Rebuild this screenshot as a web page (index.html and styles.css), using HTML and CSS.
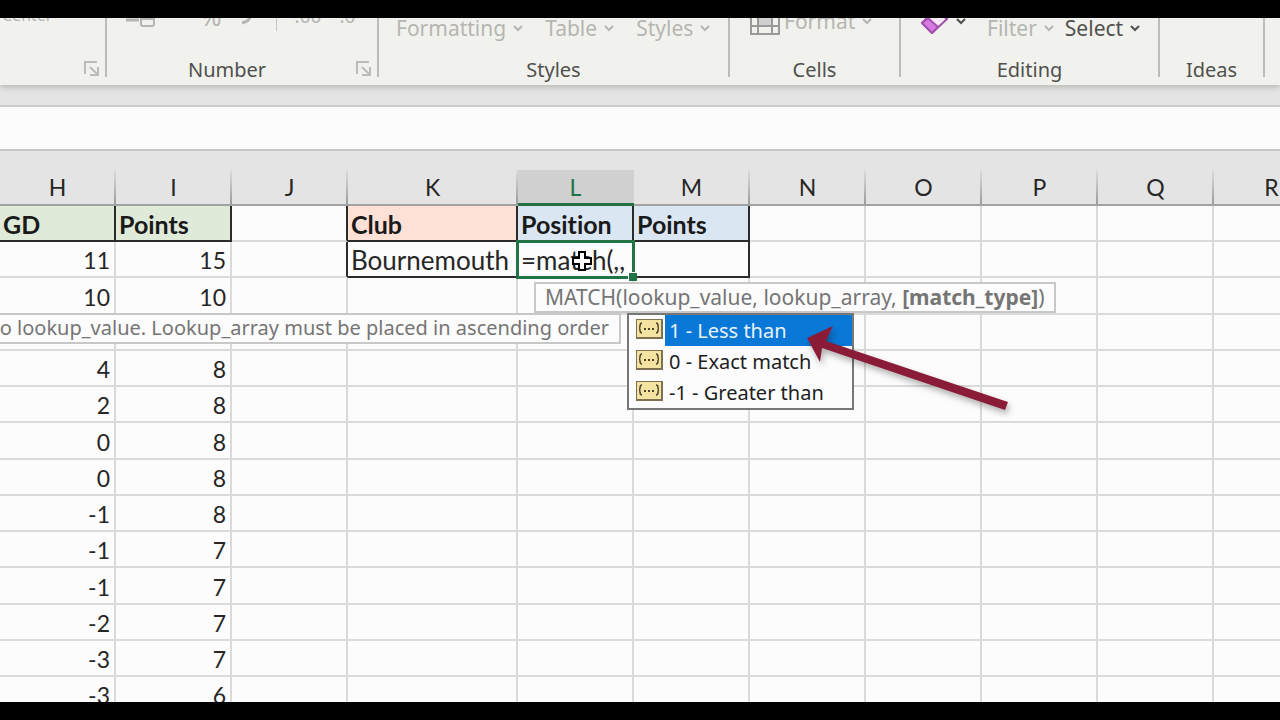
FILE: index.html
```html
<!DOCTYPE html>
<html lang="en">
<head>
  <meta charset="UTF-8">
  <meta name="viewport" content="width=device-width, initial-scale=1.0">
  <title>League table - MATCH</title>
  <link rel="stylesheet" href="styles.css">
</head>
<body>
  <svg class="defs" aria-hidden="true">
    <symbol id="chevron" viewBox="0 0 12 8"><path d="M2 2l4 4 4-4" fill="none" stroke="currentColor" stroke-width="2"/></symbol>
    <symbol id="launcher" viewBox="0 0 16 16"><path d="M1 13V1h12M6 6l8 8M14 6v8H6" fill="none" stroke="currentColor" stroke-width="2"/></symbol>
    <symbol id="enum" viewBox="0 0 27 20">
      <rect x="0" y="0" width="27" height="20" fill="#7d7152"/>
      <rect x="1" y="1" width="24" height="17" fill="#f5e3a2"/>
      <path d="M6 4q-2 0-2 3 0 2-1 2 1 0 1 2 0 3 2 3M20 4q2 0 2 3 0 2 1 2-1 0-1 2 0 3-2 3" fill="none" stroke="#4d452e" stroke-width="1.500"/>
      <path d="M8 10h2M12 10h2M16 10h2" stroke="#4d452e" stroke-width="2"/>
    </symbol>
  </svg>

  <div class="app">
    <div class="ribbon">
      <section class="group alignment">
        <div class="tools tools-top"><button>Center</button></div>
        <div class="group-foot"><span></span><button class="launcher" aria-label="Alignment settings"><svg><use href="#launcher"/></svg></button></div>
      </section>
      <section class="group number">
        <div class="tools tools-number">
          <button aria-label="Accounting format"><svg class="money" viewBox="0 0 30 24"><path d="M0 16h13" stroke="currentColor" stroke-width="3"/><path d="M15 10v10q0 2 2 2h9q2 0 2-2V10M15 15h13" fill="none" stroke="currentColor" stroke-width="2"/></svg></button>
          <button class="percent">%</button>
          <button class="comma" aria-label="Comma style"><svg viewBox="0 0 12 24"><path d="M10 12q0 5-8 7" fill="none" stroke="currentColor" stroke-width="3"/></svg></button>
          <span class="divider"></span>
          <button class="decimal">.00</button>
          <button class="decimal">.0</button>
        </div>
        <div class="group-foot"><span class="name">Number</span><button class="launcher" aria-label="Number settings"><svg><use href="#launcher"/></svg></button></div>
      </section>
      <section class="group styles">
        <div class="tools">
          <button>Formatting<svg class="chev"><use href="#chevron"/></svg></button>
          <button>Table<svg class="chev"><use href="#chevron"/></svg></button>
          <button>Styles<svg class="chev"><use href="#chevron"/></svg></button>
        </div>
        <div class="group-foot"><span class="name">Styles</span></div>
      </section>
      <section class="group cells">
        <div class="tools tools-mid">
          <button><svg class="format" viewBox="0 0 30 28"><path d="M1 0h28v27H1zM8 0v27M22 0v27M1 19h28M1 8h28" fill="none" stroke="currentColor" stroke-width="2"/><rect x="9" y="8" width="12" height="10" fill="#cfcfcf"/></svg>Format<svg class="chev"><use href="#chevron"/></svg></button>
        </div>
        <div class="group-foot"><span class="name">Cells</span></div>
      </section>
      <section class="group editing">
        <div class="tools">
          <button class="clear dark" aria-label="Clear"><svg class="eraser" viewBox="0 0 28 26"><path d="M1 15L15 1l11 10-15 14z" fill="#f4e9f5" stroke="#a44fb0" stroke-width="2"/><path d="M1 15l6-5 10 9-6 6z" fill="#d67be0" stroke="#a44fb0" stroke-width="2"/></svg><svg class="chev"><use href="#chevron"/></svg></button>
          <button>Filter<svg class="chev"><use href="#chevron"/></svg></button>
          <button class="dark">Select<svg class="chev"><use href="#chevron"/></svg></button>
        </div>
        <div class="group-foot"><span class="name">Editing</span></div>
      </section>
      <section class="group ideas">
        <div class="group-foot"><span class="name">Ideas</span></div>
      </section>
    </div>

    <div class="formula-bar"><input type="text" aria-label="Formula bar"></div>

    <div class="sheet">
      <table>
        <colgroup><col><col><col><col class="wide"><col><col><col><col><col><col><col></colgroup>
        <thead>
          <tr><th>H</th><th>I</th><th>J</th><th>K</th><th class="active">L</th><th>M</th><th>N</th><th>O</th><th>P</th><th>Q</th><th>R</th></tr>
        </thead>
        <tbody>
          <tr>
            <td class="title green box">GD</td><td class="title green box">Points</td><td class="edge"></td>
            <td class="title peach box">Club</td><td class="title blue box">Position</td><td class="title blue box last">Points</td>
            <td></td><td></td><td></td><td></td><td></td>
          </tr>
          <tr>
            <td>11</td><td>15</td><td class="edge"></td>
            <td class="text box">Bournemouth</td>
            <td class="text editing-cell"><input type="text" value="=match(,," aria-label="Cell L2"><span class="handle"></span></td>
            <td class="box"></td><td></td><td></td><td></td><td></td><td></td>
          </tr>
          <tr><td>10</td><td>10</td><td></td><td></td><td></td><td></td><td></td><td></td><td></td><td></td><td></td></tr>
          <tr><td></td><td></td><td></td><td></td><td></td><td></td><td></td><td></td><td></td><td></td><td></td></tr>
          <tr><td>4</td><td>8</td><td></td><td></td><td></td><td></td><td></td><td></td><td></td><td></td><td></td></tr>
          <tr><td>2</td><td>8</td><td></td><td></td><td></td><td></td><td></td><td></td><td></td><td></td><td></td></tr>
          <tr><td>0</td><td>8</td><td></td><td></td><td></td><td></td><td></td><td></td><td></td><td></td><td></td></tr>
          <tr><td>0</td><td>8</td><td></td><td></td><td></td><td></td><td></td><td></td><td></td><td></td><td></td></tr>
          <tr><td>-1</td><td>8</td><td></td><td></td><td></td><td></td><td></td><td></td><td></td><td></td><td></td></tr>
          <tr><td>-1</td><td>7</td><td></td><td></td><td></td><td></td><td></td><td></td><td></td><td></td><td></td></tr>
          <tr><td>-1</td><td>7</td><td></td><td></td><td></td><td></td><td></td><td></td><td></td><td></td><td></td></tr>
          <tr><td>-2</td><td>7</td><td></td><td></td><td></td><td></td><td></td><td></td><td></td><td></td><td></td></tr>
          <tr><td>-3</td><td>7</td><td></td><td></td><td></td><td></td><td></td><td></td><td></td><td></td><td></td></tr>
          <tr><td>-3</td><td>6</td><td></td><td></td><td></td><td></td><td></td><td></td><td></td><td></td><td></td></tr>
        </tbody>
      </table>

      <div class="tip syntax">MATCH(lookup_value, lookup_array, <b>[match_type]</b>)</div>
      <div class="tip hint">to lookup_value. Lookup_array must be placed in ascending order</div>

      <ul class="options">
        <li><svg class="enum"><use href="#enum"/></svg><button class="selected">1 - Less than</button></li>
        <li><svg class="enum"><use href="#enum"/></svg><button>0 - Exact match</button></li>
        <li><svg class="enum"><use href="#enum"/></svg><button>-1 - Greater than</button></li>
      </ul>

      <svg class="pointer" viewBox="0 0 22 22"><path d="M8 2h6v6h6v6h-6v6H8v-6H2V8h6z" fill="#fff" stroke="#000" stroke-width="2"/></svg>
      <svg class="arrow" viewBox="0 0 210 90"><path d="M2 14L28 2l-7 15 182 61-3 8L17 24l-2 14z" fill="#8a1c38"/></svg>
    </div>
  </div>
</body>
</html>
```
FILE: styles.css
```css
* {
  box-sizing: border-box;
}

body {
  margin: 0;
  padding: 18px 0;
  height: 100vh;
  background: #000;
  overflow: hidden;
  font-family: "Noto Sans", "Open Sans", sans-serif;
}

button {
  margin: 0;
  padding: 0;
  border: 0;
  background: none;
  font: inherit;
  color: inherit;
}

input {
  display: block;
  border: 0;
  padding: 0;
  width: 100%;
  background: none;
  font: inherit;
  color: inherit;
  outline: none;
}

.defs {
  display: none;
}

.app {
  display: flex;
  flex-direction: column;
  height: 100%;
  background: #e4e4e4;
  overflow: hidden;
}

/* ribbon */
.ribbon {
  display: flex;
  flex: none;
  height: 67px;
  padding-bottom: 8px;
  background: #f1f2ed;
  box-shadow: 0 2px 6px #b4b4b0;
  clip-path: inset(0 0 -8px 0);
}

.group {
  display: flex;
  flex-direction: column;
  justify-content: flex-end;
  flex: none;
  border-right: 2px solid #bcbcba;
}

.alignment { width: 107px; }
.number { width: 272px; }
.styles { width: 351px; }
.cells { width: 171px; }
.editing { width: 259px; }
.ideas { width: 105px; }

.tools {
  display: flex;
  align-items: center;
  flex: none;
  height: 28px;
  margin-bottom: 21px;
  font-size: 21px;
  line-height: 28px;
  color: #b5b5b2;
}

.tools button {
  display: flex;
  align-items: center;
}

.tools-top { margin-bottom: 32px; padding-left: 2px; font-size: 16px; }
.tools-number { margin-bottom: 31px; padding-left: 19px; }
.tools-mid { margin-bottom: 28px; padding-left: 20px; }
.styles .tools { padding-left: 17px; gap: 21px; }
.editing .tools { padding-left: 20px; gap: 10px; }

.chev {
  width: 12px;
  height: 8px;
  margin-left: 6px;
}

.money { width: 30px; height: 24px; }
.percent { margin-left: 44px; font-size: 26px; }
.comma { margin-left: 18px; }
.comma svg { width: 12px; height: 24px; }
.decimal { margin-left: 18px; font-size: 19px; }

.divider {
  width: 1px;
  height: 30px;
  margin-left: 24px;
  background: #c4c4c2;
}

.format { width: 30px; height: 28px; margin-right: 4px; color: #9a9a9a; }
.eraser { width: 28px; height: 26px; margin-bottom: 14px; }
.clear .chev { margin-bottom: 14px; }
.clear { margin-right: 10px; }
.tools .dark { color: #50504e; }

.group-foot {
  display: flex;
  align-items: flex-end;
  justify-content: space-between;
}

.name {
  flex: 1;
  text-align: center;
  font-size: 20px;
  line-height: 14px;
  color: #50504e;
}

.launcher {
  width: 16px;
  height: 16px;
  margin: 0 5px 0 9px;
  color: #bcbcba;
}

.launcher svg {
  display: block;
  width: 16px;
  height: 16px;
}

/* formula bar */
.formula-bar {
  flex: none;
  height: 46px;
  margin-top: 20px;
  background: #fcfcfc;
  border-top: 2px solid #cbcbcb;
  border-bottom: 2px solid #c6c6c6;
}

.formula-bar input {
  height: 100%;
}

/* sheet */
.sheet {
  position: relative;
  flex: 1;
  min-height: 0;
  padding-top: 19px;
  overflow: hidden;
}

table {
  width: 1330px;
  table-layout: fixed;
  border-collapse: separate;
  border-spacing: 0;
  font-family: Lato, sans-serif;
  font-size: 23px;
  font-variant-ligatures: none;
  line-height: 30px;
  color: #262626;
}

col { width: 116px; }
.wide { width: 170px; }

th {
  height: 36px;
  padding: 0 1px 0 0;
  border-bottom: 2px solid #a2a2a2;
  background: linear-gradient(#dcdcdc, #9c9c9c) right / 2px 100% no-repeat;
  font-weight: normal;
}

th.active {
  background: #d0d0d0;
  border-bottom: 3px solid #217346;
  color: #217346;
}

td {
  height: 36px;
  padding: 2px 4px 0 3px;
  border-right: 2px solid #dadada;
  border-bottom: 2px solid #dadada;
  background: #fcfcfc;
  text-align: right;
}

tbody tr:nth-child(4n+3) td {
  height: 37px;
}

.title {
  text-align: left;
  font-size: 25px;
  font-weight: bold;
  color: #1a1a1a;
}

.text { text-align: left; font-size: 26px; white-space: nowrap; }
.green { background: #e0ead8; }
.peach { background: #fde0d6; }
.blue { background: #dae7f3; }
td.box { border-color: #2b2b2b; }
td.edge { border-right-color: #2b2b2b; }

.editing-cell {
  position: relative;
}

.editing-cell input {
  height: 30px;
}

.editing-cell::after {
  content: "";
  position: absolute;
  inset: -2px -3px -3px -2px;
  border: 3px solid #217346;
  pointer-events: none;
}

.handle {
  position: absolute;
  right: -5px;
  bottom: -5px;
  z-index: 1;
  width: 9px;
  height: 9px;
  background: #217346;
  border: 1px solid #fcfcfc;
  border-width: 1px 0 0 1px;
}

/* function help */
.tip {
  position: absolute;
  height: 31px;
  border: 2px solid #c8c8c8;
  background: #fcfcfc;
  font-size: 20px;
  line-height: 26px;
  color: #757575;
  white-space: nowrap;
}

.syntax {
  left: 534px;
  top: 131px;
  padding: 0 9px;
  font-size: 21px;
}

.hint {
  right: calc(100% - 621px);
  top: 162px;
  padding-right: 10px;
}

.options {
  position: absolute;
  left: 627px;
  top: 162px;
  width: 227px;
  margin: 0;
  padding: 0;
  list-style: none;
  border: 2px solid #777;
  background: #fcfcfc;
  font-size: 20px;
  line-height: 31px;
  color: #1e1e1e;
}

.options li {
  display: flex;
  align-items: center;
  gap: 2px;
  height: 31px;
  padding-left: 7px;
}

.options button {
  flex: 1;
  padding-left: 4px;
  text-align: left;
}

.options .selected {
  background: #0a78d7;
  color: #e8f3fc;
}

.enum {
  width: 27px;
  height: 20px;
  margin-bottom: 4px;
}

.pointer {
  position: absolute;
  left: 571px;
  top: 99px;
  width: 22px;
  height: 22px;
}

.arrow {
  position: absolute;
  left: 805px;
  top: 173px;
  width: 210px;
  height: 90px;
  filter: drop-shadow(2px 4px 3px rgba(0, 0, 0, 0.3));
}
```
